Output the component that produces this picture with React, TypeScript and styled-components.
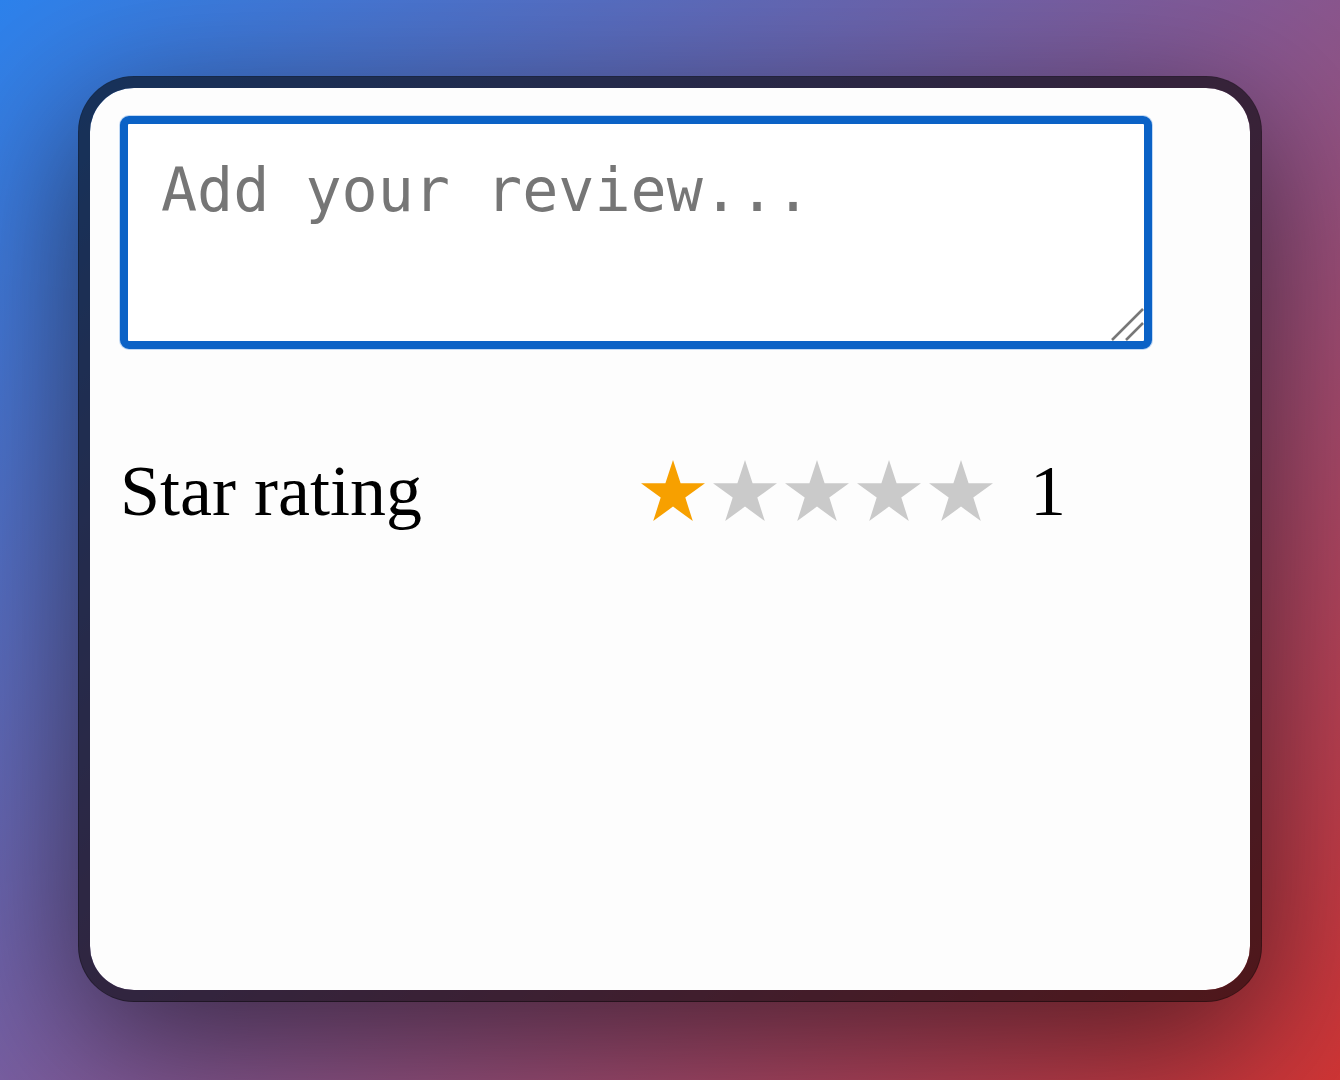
import React, { useState } from 'react';
import styled, { createGlobalStyle } from 'styled-components';

const GlobalStyle = createGlobalStyle`
  html, body {
    margin: 0;
    padding: 0;
  }
  body {
    font-family: "Liberation Serif", "Times New Roman", serif;
  }
`;

const Backdrop = styled.div`
  width: 1340px;
  height: 1080px;
  box-sizing: border-box;
  padding: 76px 78px 78px;
  background: linear-gradient(135deg, #2d82ec 0%, #815a98 50%, #d03535 100%);
  overflow: hidden;
`;

const Frame = styled.div`
  box-sizing: border-box;
  width: 1184px;
  height: 926px;
  border: 12px solid rgba(0, 0, 0, 0.6);
  border-radius: 56px;
  background: #fdfdfd;
  background-clip: padding-box;
  box-shadow: 0 40px 140px rgba(0, 0, 0, 0.55);
  padding: 28px 30px;
  display: flex;
  flex-direction: column;
`;

const ReviewBox = styled.div`
  position: relative;
  width: 1032px;
  height: 233px;
`;

const ReviewInput = styled.textarea`
  box-sizing: border-box;
  width: 100%;
  height: 100%;
  margin: 0;
  border: 8px solid #0b62c6;
  border-radius: 9px;
  box-shadow: 0 0 0 1px rgba(80, 150, 230, 0.35);
  outline: none;
  resize: none;
  padding: 31px 33px;
  font-family: "DejaVu Sans Mono", monospace;
  font-size: 60px;
  color: #222;
  background: #fff;

  &::placeholder {
    color: #767676;
  }
`;

const Grip = styled.svg`
  position: absolute;
  right: 8px;
  bottom: 8px;
  width: 34px;
  height: 34px;
  pointer-events: none;
`;

const RatingRow = styled.div`
  display: flex;
  align-items: center;
  margin-top: 101px;
  font-size: 72px;
  line-height: 1.15;
  color: #000;
`;

const RatingLabel = styled.span`
  width: 520px;
  flex-shrink: 0;
`;

const Stars = styled.div`
  display: flex;
  gap: 6px;
`;

const StarButton = styled.button<{ $on: boolean }>`
  border: none;
  background: none;
  padding: 0;
  margin: 0;
  width: 66px;
  height: 64px;
  cursor: pointer;
  color: ${({ $on }) => ($on ? '#f7a000' : '#cacaca')};

  svg {
    display: block;
    width: 100%;
    height: 100%;
  }
`;

const RatingValue = styled.span`
  margin-left: 36px;
`;

const Star = () => (
  <svg viewBox="0 0 66 64">
    <polygon
      fill="currentColor"
      points="33,1 40.6,24.2 65,24.2 45.3,38.6 52.8,62 33,47.6 13.2,62 20.7,38.6 1,24.2 25.4,24.2"
    />
  </svg>
);

const App: React.FC = () => {
  const [rating, setRating] = useState(1);
  const [review, setReview] = useState('');

  return (
    <>
      <GlobalStyle />
      <Backdrop>
        <Frame>
          <ReviewBox>
            <ReviewInput
              placeholder="Add your review..."
              value={review}
              onChange={e => setReview(e.target.value)}
            />
            <Grip viewBox="0 0 34 34">
              <line x1="2" y1="33" x2="33" y2="2" stroke="#777" strokeWidth="2.5" />
              <line x1="16" y1="33" x2="33" y2="16" stroke="#777" strokeWidth="2.5" />
            </Grip>
          </ReviewBox>

          <RatingRow>
            <RatingLabel>Star rating</RatingLabel>
            <Stars>
              {[1, 2, 3, 4, 5].map(n => (
                <StarButton key={n} $on={n <= rating} onClick={() => setRating(n)} aria-label={`${n} stars`}>
                  <Star />
                </StarButton>
              ))}
            </Stars>
            <RatingValue>{rating}</RatingValue>
          </RatingRow>
        </Frame>
      </Backdrop>
    </>
  );
};

export default App;
